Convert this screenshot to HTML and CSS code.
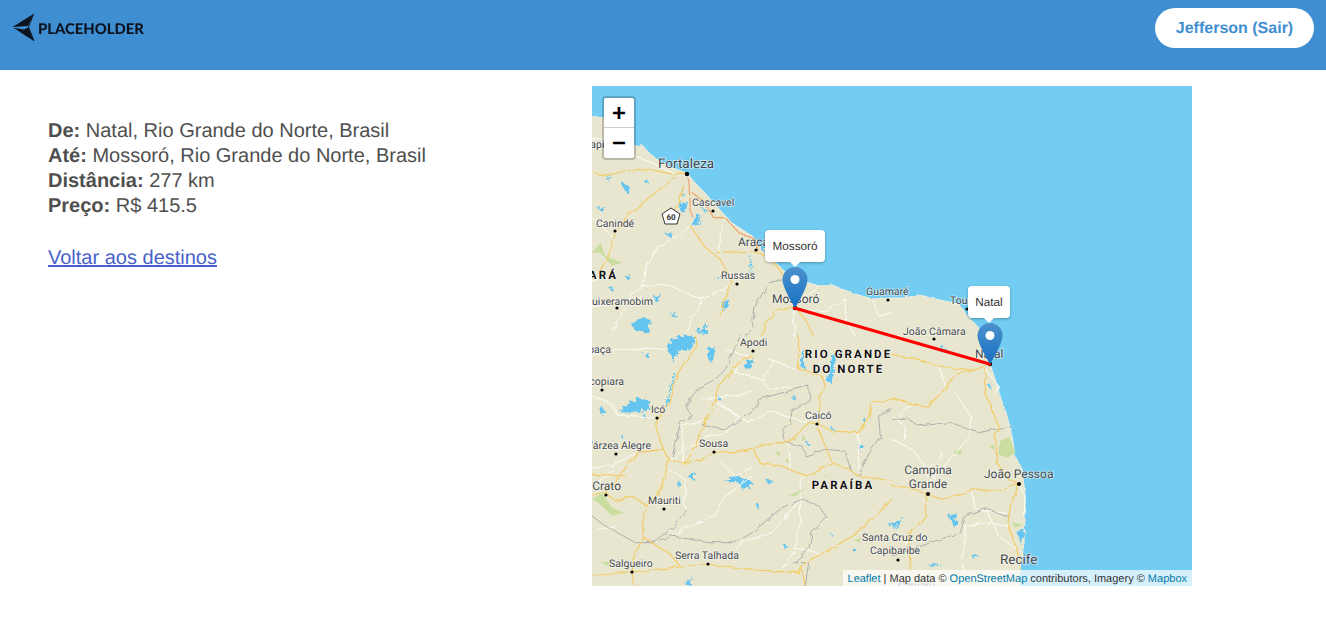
FILE: index.html
```html
<!DOCTYPE html>
<html lang="pt-BR">
<head>
<meta charset="utf-8">
<title>Viagem</title>
<link rel="stylesheet" href="styles.css">
</head>
<body>
<header class="topbar">
  <a class="logo" href="#">
    <svg class="logo-mark" width="24" height="30" viewBox="12 13 24 30" aria-hidden="true">
      <path d="M12.5 27 33.5 14 28 26 17 26.8Z" fill="#0d1420"/>
      <path d="M13.5 27.8 24 29.5 28.2 27.5 34 41 26 36Z" fill="#0d1420"/>
      <path d="M33.5 14 28.5 27 34 41" fill="none" stroke="#0d1420" stroke-width="1"/>
    </svg>
    <span class="logo-text">PLACEHOLDER</span>
  </a>
  <a class="user-button" href="#">Jefferson (Sair)</a>
</header>
<main class="content">
  <section class="details">
    <p class="summary">
      <strong>De:</strong> Natal, Rio Grande do Norte, Brasil<br>
      <strong>Até:</strong> Mossoró, Rio Grande do Norte, Brasil<br>
      <strong>Distância:</strong> 277 km<br>
      <strong>Preço:</strong> R$ 415.5
    </p>
    <a class="back-link" href="#">Voltar aos destinos</a>
  </section>
  <section class="map">
    <svg class="map-canvas" width="600" height="500" viewBox="0 0 600 500" aria-label="Mapa">
      <defs>
        <linearGradient id="pin" x1="0" y1="0" x2="0" y2="1">
          <stop offset="0" stop-color="#4c92cc"/>
          <stop offset="1" stop-color="#1670c4"/>
        </linearGradient>
        <filter id="rough-water" x="-5%" y="-5%" width="110%" height="110%">
          <feTurbulence type="fractalNoise" baseFrequency=".09" numOctaves="2" seed="4"/>
          <feDisplacementMap in="SourceGraphic" scale="22"/>
        </filter>
        <filter id="rough-road" x="-5%" y="-5%" width="110%" height="110%">
          <feTurbulence type="fractalNoise" baseFrequency=".035" numOctaves="2" seed="7"/>
          <feDisplacementMap in="SourceGraphic" scale="14"/>
        </filter>
        <filter id="rough-coast" x="-2%" y="-2%" width="104%" height="104%">
          <feTurbulence type="fractalNoise" baseFrequency=".18" numOctaves="2" seed="2"/>
          <feDisplacementMap in="SourceGraphic" scale="3"/>
        </filter>
      </defs>
      <rect class="sea" width="600" height="500"/>
      <path class="land" filter="url(#rough-coast)" d="M-10 30 15 32 27 41 35 52 43 60 50 59 57 67 67 75 80 82 95 87 103 97 113 107 127 123 140 137 160 150 173 163 182 175 197 190 217 197 227 200 240 199 260 207 280 213 297 212 312 212 327 209 343 213 367 218 375 230 387 242 392 255 396 268 398 278 403 293 408 310 415 330 420 350 423 370 430 383 433 407 433 430 432 457 428 483 427 510 -10 510Z"/>

      <g class="layer" transform="scale(.3333)">
        <g class="greens">
          <path d="M0 500 25 470 40 510 90 530 60 540 25 500Z"/>
        </g>
        <g class="water" filter="url(#rough-water)">
          <path d="M85 285 110 300 115 325 100 318Z"/><path d="M15 365 45 362 30 378Z"/><path d="M40 275 60 270 50 285Z"/>
          <path d="M155 285 172 278 165 292Z"/><path d="M262 350 288 348 280 378 264 375Z"/><path d="M268 315 278 312 272 332Z"/>
          <path d="M305 392 326 388 318 415 302 422Z"/><path d="M330 365 345 372 340 382Z"/><path d="M215 440 240 438 235 455Z"/>
          <path d="M474 500 480 535 472 560Z"/><path d="M98 570 118 568 110 585Z"/><path d="M50 602 65 605 55 612Z"/>
          <path d="M370 578 385 565 380 580Z"/><path d="M390 650 412 640 395 680Z"/><path d="M235 685 255 680 245 695Z"/>
          <path d="M185 630 210 628 195 655Z"/><path d="M118 715 150 690 178 705 170 738 130 735Z"/><path d="M310 740 345 715 345 745Z"/>
          <path d="M500 470 530 480 510 495Z"/>
        </g>
        <g filter="url(#rough-road)">
          <path class="road" d="M0 160 50 155 120 205 190 235 250 265M150 600 220 595 330 640 420 600M150 600 100 640 0 665M295 420 260 450 200 480 160 550 150 600M395 410 380 490M330 640 290 720 270 750M150 630 85 690 60 750M605 665 605 750M760 640 760 700 790 750M605 665 700 680 760 640M840 640 860 690 900 680M680 600 620 640M0 585 50 575M0 395 60 450"/>
          <path class="yellow" d="M0 258 40 270 100 255 160 248 230 262 285 265M250 275 190 320 110 385 70 440 50 510 20 560M275 300 262 350 240 370M295 420 340 485 385 520 420 590 400 640 380 700M375 500 490 495 540 520 590 590M605 665 560 670 520 710 510 750M610 665 640 700 665 750"/>
          <path class="orange" d="M290 280 295 370 305 395M300 320 335 345 365 395 400 395 440 440 490 460 495 490"/>
          <path class="gray" d="M605 575 530 590 490 660 480 720 460 750"/>
        </g>
      </g>

      <g class="layer" transform="translate(0 250) scale(.3333)">
        <g class="greens">
          <path d="M550 345 565 350 560 365Z"/><path d="M635 295 640 312 628 315Z"/><path d="M585 365 595 380 580 378Z"/><path d="M590 480 640 455 610 480Z"/>
          <path d="M0 490 30 470 60 515 95 530 60 540 20 500Z"/><path d="M25 680 55 675 50 690Z"/><path d="M785 612 805 605 805 620Z"/><path d="M700 420 720 410 690 430Z"/>
        </g>
        <g class="water" filter="url(#rough-water)">
          <path d="M225 30 255 0 310 0 300 40 260 45 245 80Z"/><path d="M350 35 372 35 362 78 350 75Z"/><path d="M155 55 172 50 165 65Z"/>
          <path d="M460 75 485 68 478 95 458 98Z"/><path d="M248 110 252 110 225 215 220 205Z"/><path d="M80 225 135 185 175 195 170 220 110 230Z"/>
          <path d="M25 205 38 225 25 235Z"/><path d="M155 240 170 240 160 250Z"/><path d="M85 300 95 298 90 308Z"/><path d="M378 178 388 190 378 195Z"/>
          <path d="M285 420 312 408 302 430Z"/><path d="M250 435 270 440 258 450Z"/><path d="M396 435 430 420 470 430 485 445 452 460 440 440Z"/>
          <path d="M520 430 545 435 525 442Z"/><path d="M492 505 505 505 498 522Z"/><path d="M575 625 590 630 578 640Z"/><path d="M595 185 615 178 610 192Z"/>
          <path d="M640 315 652 315 645 328Z"/><path d="M800 325 818 330 805 348Z"/><path d="M718 275 735 285 718 285Z"/><path d="M810 245 822 245 812 258Z"/>
          <path d="M280 745 300 720 295 750Z"/><path d="M780 635 792 640 785 650Z"/><path d="M715 595 730 590 722 602Z"/><path d="M895 555 900 575 890 570Z"/>
          <path d="M628 50 640 40 635 95 628 95Z"/><path d="M720 60 732 50 725 110 718 140 702 135 715 100Z"/>
        </g>
        <g filter="url(#rough-road)">
          <path class="road" d="M0 180 50 200 75 235 195 245M0 60 60 40 150 40 230 40M60 200 75 235M370 200 470 260 540 225 640 260M340 255 270 270 275 385M400 40 470 60M530 70 550 75 610 100M510 130 530 160 600 150M440 80 430 110 510 130M515 130 545 75M330 190 480 170M380 200 440 240 410 290 340 305 230 370M0 395 60 390 130 350M480 420 390 490 370 540 290 570 240 600M640 420 625 430 625 560 610 640 570 700M625 490 540 590 460 615 430 640M800 290 800 400M380 375 430 420 490 390M20 580 80 570M0 450 70 400M230 400 280 430 280 520 230 600M660 230 640 260M590 320 595 400M610 640 680 650"/>
          <path class="gray" d="M445 0 400 100 370 130 320 155 280 210 300 240 265 260 250 330 240 360M330 265 400 280 430 260 490 215 500 190 590 165 650 150 655 195 600 225 595 260 570 290 580 320 630 330 640 360 700 340 760 345 775 400M0 540 40 570 130 620 180 620 250 570 280 520M240 600 350 620 430 620 480 590 570 515 630 490 680 510 705 545 660 590 650 640 605 680 650 680 640 750M800 420 830 355 865 300 860 240 900 220M180 620 240 600"/>
          <path class="yellow" d="M310 0 315 30 270 90 250 130 235 200 195 245M195 245 195 290 215 340 230 370 215 430 200 470 165 510 150 570 155 605 130 650 120 710 125 750M130 350 215 340M480 60 440 80 375 155 370 200 340 255 310 330 280 385 230 370M280 385 340 365 365 350 430 350 485 335 560 320 590 320 650 260 680 265 720 285 800 290 830 240 840 200 900 190M485 340 505 380 570 390 640 420 720 380 770 400 800 420 900 435M680 280 720 380M690 120 700 150 685 180 680 260M620 0 620 100 690 120M0 720 120 708 240 695 350 685 450 700 620 710 640 680 800 590 900 490M0 475 40 470 70 495 120 480 165 510M135 350 90 410 40 470M155 605 230 650 260 685M630 700 640 750M100 420 0 415"/>
        </g>
      </g>

      <g class="layer" transform="translate(300 250) scale(.3333)">
        <g class="greens">
          <path d="M325 315 352 302 370 350 345 365 318 355Z"/><path d="M290 330 310 325 305 342Z"/><path d="M185 345 205 340 210 355 190 355Z"/><path d="M360 560 395 565 370 575Z"/>
        </g>
        <g class="water" filter="url(#rough-water)">
          <path d="M165 540 195 532 190 580 180 555Z"/><path d="M0 570 38 542 20 570 5 580Z"/><path d="M238 660 258 655 245 670Z"/><path d="M108 690 145 680 130 692Z"/>
          <path d="M285 145 298 142 295 158Z"/><path d="M375 585 400 580 385 625Z"/><path d="M130 35 165 35 150 50Z"/>
        </g>
        <g filter="url(#rough-road)">
          <path class="road" d="M0 10 30 0M140 90 160 150M190 170 235 240 235 300 200 340 110 440M0 310 60 340 130 430M150 350 100 420M0 240 40 270 40 310M240 470 250 520 350 530M215 570 300 560 350 570M220 570 210 700M280 515 320 600 375 640M40 620 110 610M380 445 400 480 395 540M280 100 320 150 310 170M60 205 20 240"/>
          <path class="gray" d="M0 250 50 250 80 270 170 260 260 290 355 270M355 545 280 515 220 540 205 590 130 615 60 640 0 660"/>
          <path class="yellow" d="M0 55 70 70 140 90 240 105 290 85M280 100 280 170 300 220 320 270 310 300 315 380 350 430 380 445M0 450 50 455 105 475 150 490 250 460 320 465 380 445 360 500 350 570 375 640 385 700M105 475 100 540 50 600 55 700M240 105 190 115 150 170 105 210 60 205 0 185"/>
        </g>
      </g>

      <g class="dots">
        <circle cx="95" cy="88" r="2.2"/><circle cx="121" cy="125" r="1.6"/><circle cx="23" cy="145" r="1.6"/>
        <circle cx="164" cy="164" r="1.6"/><circle cx="145" cy="198" r="1.6"/><circle cx="25" cy="222" r="1.6"/>
        <circle cx="296" cy="214" r="1.6"/><circle cx="375" cy="223" r="1.6"/><circle cx="342" cy="253" r="1.6"/>
        <circle cx="161" cy="265" r="1.6"/><circle cx="10" cy="304" r="1.6"/><circle cx="65" cy="332" r="1.6"/>
        <circle cx="24" cy="368" r="1.6"/><circle cx="122" cy="366" r="1.6"/><circle cx="225" cy="338" r="1.6"/>
        <circle cx="14" cy="409" r="1.6"/><circle cx="72" cy="423" r="1.6"/><circle cx="116" cy="478" r="1.6"/>
        <circle cx="40" cy="486" r="1.6"/><circle cx="336" cy="408" r="2"/><circle cx="427" cy="398" r="2"/>
        <circle cx="306" cy="474" r="1.6"/><circle cx="203" cy="222" r="2.2"/><circle cx="398" cy="278" r="2.2"/>
      </g>

      <g class="labels">
        <text class="sm" x="-8" y="62">Itapipoca</text>
        <text class="lg" x="66" y="82">Fortaleza</text>
        <text class="sm" x="100" y="120">Cascavel</text>
        <text class="sm" x="4" y="141">Canindé</text>
        <text class="md" x="146" y="160">Aracati</text>
        <text class="sm" x="129" y="193">Russas</text>
        <text class="sm" x="61" y="219" text-anchor="end">Quixeramobim</text>
        <text class="sm" x="274" y="209">Guamaré</text>
        <text class="sm" x="358" y="218">Touros</text>
        <text class="md" x="180" y="217">Mossoró</text>
        <text class="sm" x="311" y="249">João Câmara</text>
        <text class="md" x="383" y="272">Natal</text>
        <text class="sm" x="148" y="260">Apodi</text>
        <text class="sm" x="19" y="267" text-anchor="end">paça</text>
        <text class="sm" x="32" y="299" text-anchor="end">Acopiara</text>
        <text class="sm" x="59" y="327">Icó</text>
        <text class="sm" x="59" y="363" text-anchor="end">Várzea Alegre</text>
        <text class="md" x="29" y="404" text-anchor="end">Crato</text>
        <text class="sm" x="56" y="418">Mauriti</text>
        <text class="sm" x="107" y="361">Sousa</text>
        <text class="sm" x="213" y="333">Caicó</text>
        <text class="sm" x="17" y="481">Salgueiro</text>
        <text class="sm" x="83" y="473">Serra Talhada</text>
        <text class="sm" x="270" y="455">Santa Cruz do</text>
        <text class="sm" x="278" y="468">Capibaribe</text>
        <text class="md" x="336" y="388" text-anchor="middle">Campina</text>
        <text class="md" x="336" y="402" text-anchor="middle">Grande</text>
        <text class="md" x="392" y="392">João Pessoa</text>
        <text class="lg" x="408" y="478">Recife</text>
        <text class="sm" x="306" y="503">Caruaru</text>
        <text class="st" x="26" y="193" text-anchor="end">CEARÁ</text>
        <text class="st" x="256.5" y="272" text-anchor="middle">RIO GRANDE</text>
        <text class="st" x="256.5" y="287" text-anchor="middle">DO NORTE</text>
        <text class="st" x="251" y="403" text-anchor="middle">PARAÍBA</text>
      </g>

      <g class="shield">
        <path d="M79 122 88 128 85 138 73 138 70 128Z"/>
        <text x="79" y="134" text-anchor="middle">60</text>
      </g>

      <path class="route" d="M202.5 222 397.5 278"/>

      <g transform="translate(190.5 181)">
        <path fill="url(#pin)" d="M12.5 0C5.6 0 0 5.6 0 12.5 0 21 12.5 41 12.5 41S25 21 25 12.5C25 5.6 19.4 0 12.5 0z"/>
        <circle cx="12.5" cy="12.5" r="4.5" fill="#fff"/>
      </g>
      <g transform="translate(385.5 237)">
        <path fill="url(#pin)" d="M12.5 0C5.6 0 0 5.6 0 12.5 0 21 12.5 41 12.5 41S25 21 25 12.5C25 5.6 19.4 0 12.5 0z"/>
        <circle cx="12.5" cy="12.5" r="4.5" fill="#fff"/>
      </g>
    </svg>

    <div class="zoom-control">
      <a class="zoom-btn zoom-in" href="#">+</a>
      <a class="zoom-btn" href="#">−</a>
    </div>
    <div class="popup popup-mossoro">Mossoró</div>
    <div class="popup popup-natal">Natal</div>
    <div class="attribution"><a href="#">Leaflet</a> | Map data © <a href="#">OpenStreetMap</a> contributors, Imagery © <a href="#">Mapbox</a></div>
  </section>
</main>
</body>
</html>
```
FILE: styles.css
```css
* { box-sizing: border-box; }
html, body { margin: 0; padding: 0; }
body {
  background: #fff;
  color: #4f4f4f;
  font-family: "Liberation Sans", Arial, sans-serif;
  font-size: 20px;
  overflow: hidden;
  text-rendering: geometricPrecision;
}
.topbar {
  height: 70px;
  background: #3f8ed1;
  display: flex;
  justify-content: space-between;
  align-items: flex-start;
  padding: 8px 12px 0 12px;
}
.logo {
  display: flex;
  align-items: center;
  gap: 2px;
  margin-top: 5px;
  text-decoration: none;
  filter: blur(.4px);
}
.logo-mark { display: block; flex: none; }
.logo-text {
  font-family: Lato, "Liberation Sans", sans-serif;
  font-weight: 900;
  font-size: 14.8px;
  color: #0d1420;
  line-height: 28px;
  margin-top: 2px;
}
.user-button {
  width: 159px;
  height: 40px;
  border-radius: 20px;
  background: #fff;
  color: #3f8ed1;
  font-weight: 700;
  font-size: 16px;
  line-height: 41px;
  text-align: center;
  text-decoration: none;
}
.content {
  display: flex;
  align-items: flex-start;
  padding-top: 16px;
}
.details {
  width: 592px;
  padding: 33px 48px 0;
  line-height: 25px;
}
.summary { margin: 0 0 27px; }
.summary strong { font-weight: 700; }
.back-link { color: #4a5fcb; line-height: 25px; }
.map {
  position: relative;
  width: 600px;
  height: 500px;
  overflow: hidden;
  flex: none;
}
.map-canvas { display: block; }
.sea { fill: #73cdf2; }
.land { fill: #e8e6cf; stroke: #f1efe0; stroke-width: 1; }
.road, .yellow, .orange, .gray { fill: none; stroke-linejoin: round; stroke-linecap: round; }
.road { stroke: #fdfdf8; stroke-width: 3; }
.yellow { stroke: #f3cb62; stroke-width: 3.4; }
.orange { stroke: #efa066; stroke-width: 3.4; }
.gray { stroke: #a8abaa; stroke-width: 2.8; }
.water path { fill: #62c4ef; }
.greens path { fill: #c9dda0; }
.dots circle { fill: #000; }
.labels text {
  font-family: Roboto, "Liberation Sans", sans-serif;
  fill: #44484b;
  stroke: rgba(255, 255, 255, .6);
  stroke-width: 1.6px;
  paint-order: stroke;
  stroke-linejoin: round;
}
.labels .sm { font-size: 10.5px; }
.labels .md { font-size: 12px; }
.labels .lg { font-size: 13.5px; }
.labels .st {
  font-size: 11.5px;
  font-weight: 700;
  fill: #111;
  letter-spacing: 2.1px;
}
.shield path { fill: #fff; stroke: #333; stroke-width: 1; stroke-linejoin: round; }
.shield text { font-family: Roboto, sans-serif; font-size: 8px; font-weight: 700; fill: #333; }
.route { stroke: #f00; stroke-width: 3.2; stroke-linecap: round; fill: none; }

.zoom-control {
  position: absolute;
  left: 10px;
  top: 10px;
  width: 34px;
  border: 2px solid rgba(0, 0, 0, .2);
  border-radius: 4px;
  background-clip: padding-box;
}
.zoom-btn {
  display: block;
  width: 30px;
  height: 30px;
  overflow: hidden;
  background: #fff;
  color: #000;
  font-family: "Liberation Mono", monospace;
  font-size: 24px;
  font-weight: 700;
  line-height: 36px;
  text-align: center;
  text-decoration: none;
  border-radius: 0 0 2px 2px;
}
.zoom-in {
  border-bottom: 1px solid #ccc;
  border-radius: 2px 2px 0 0;
}
.popup {
  position: absolute;
  height: 32px;
  background: #fff;
  border-radius: 4px;
  box-shadow: 0 1px 3px rgba(0, 0, 0, .3);
  color: #333;
  font-size: 11.7px;
  line-height: 34px;
  text-align: center;
}
.popup::after {
  content: "";
  position: absolute;
  left: 50%;
  bottom: -5px;
  margin-left: -5px;
  border-left: 5px solid transparent;
  border-right: 5px solid transparent;
  border-top: 5px solid #fff;
}
.popup-mossoro { left: 173px; top: 144px; width: 60px; }
.popup-natal { left: 376px; top: 200px; width: 42px; }
.attribution {
  position: absolute;
  right: 0;
  bottom: 0;
  height: 16px;
  padding: 0 5px;
  background: rgba(255, 255, 255, .7);
  color: #333;
  font-size: 11px;
  line-height: 18px;
}
.attribution a { color: #0078a8; text-decoration: none; }
```
